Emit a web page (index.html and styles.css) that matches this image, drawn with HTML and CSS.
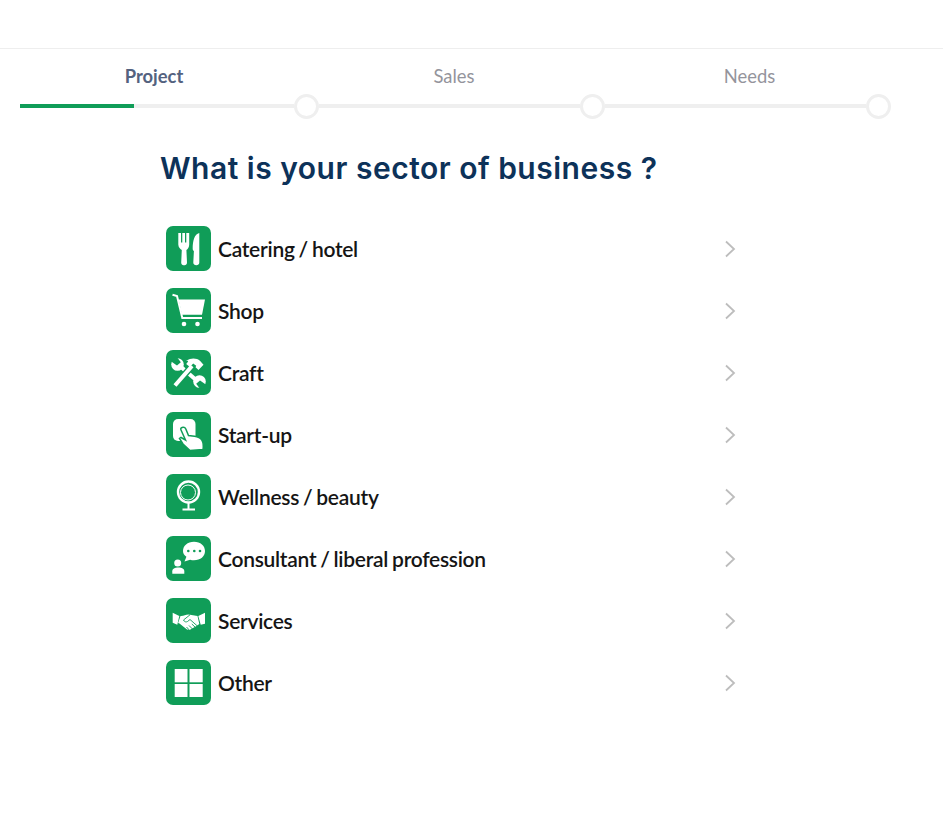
FILE: index.html
```html
<!DOCTYPE html>
<html lang="en">
<head>
  <meta charset="UTF-8">
  <meta name="viewport" content="width=device-width, initial-scale=1">
  <title>Sector of business</title>
  <link rel="stylesheet" href="styles.css">
</head>
<body>

<!-- Top bar -->
<header class="topbar"></header>

<!-- Steps -->
<nav class="steps">
  <div class="step-labels">
    <span class="step-label active">Project</span>
    <span class="step-label">Sales</span>
    <span class="step-label">Needs</span>
  </div>
  <div class="track">
    <div class="segment first"><div class="segment-fill"></div></div>
    <div class="dot"></div>
    <div class="segment"></div>
    <div class="dot"></div>
    <div class="segment"></div>
    <div class="dot"></div>
  </div>
</nav>

<main class="content">
  <h1 class="title">What is your sector of business ?</h1>

  <ul class="sectors">
    <li class="sector">
      <span class="sector-icon">
        <svg viewBox="0 0 45 45" width="45" height="45">
          <path class="fill" d="M12.300 7H15v9.500h1.300V7H19v9.500h1.300V7h2.900v11.500c0 3-1.500 4.500-2.800 5.500l.6 12.500c0 1.800-1.200 2.800-2.300 2.800h-1.200c-1.200 0-2.300-1-2.300-2.800l.6-12.500c-1.300-1-3.500-2.500-3.500-5.500z"/>
          <path class="fill" d="M33.300 7v29.500c0 1.800-1.300 2.800-3 2.800s-3-1-3-2.800l.6-11.500c-1-.5-1.200-1.200-1.200-2.500C26.700 15 28.500 8 33.300 7z"/>
        </svg>
      </span>
      <span class="sector-name">Catering / hotel</span>
      <svg class="chevron" viewBox="0 0 12 18" width="12" height="18"><path d="M2 1.500 10 9l-8 7.500"/></svg>
    </li>
    <li class="sector">
      <span class="sector-icon">
        <svg viewBox="0 0 45 45" width="45" height="45">
          <path class="line" d="M6.500 6.700 11 8l5.300 22H36"/>
          <path class="fill" d="M12.500 11.500H39l-3 15.300H16z"/>
          <circle class="fill" cx="18" cy="36" r="2.300"/>
          <circle class="fill" cx="31.500" cy="36" r="2.300"/>
        </svg>
      </span>
      <span class="sector-name">Shop</span>
      <svg class="chevron" viewBox="0 0 12 18" width="12" height="18"><path d="M2 1.500 10 9l-8 7.500"/></svg>
    </li>
    <li class="sector">
      <span class="sector-icon">
        <svg viewBox="0 0 45 45" width="45" height="45">
          <!-- wrench -->
          <path class="thick" d="M11 13.500 33 32.500"/>
          <circle class="fill" cx="11.500" cy="14.500" r="6.300"/>
          <circle class="fill" cx="33.500" cy="31.500" r="6.300"/>
          <path class="fill-green" d="M4.500 11 11 15.500l3.800-3.300-4.300-5.700z"/>
          <path class="fill-green" d="M40.500 35 34 30.500l-3.800 3.300 4.300 5.700z"/>
          <!-- hammer -->
          <path class="thick-cut" d="M9 35.500 26 16"/>
          <path class="thick" d="M9 35.500 26 16"/>
          <path class="fill" d="M20.500 10.500c4.500-2.800 10-2.800 13.700.4l3.300 3.800-5 5.300-3-2.800.7-1.400-3-2.200-3.300 3.300-3.700-3 2-2.500c-.7-.9-1.500-1.300-2.500-1.700z"/>
        </svg>
      </span>
      <span class="sector-name">Craft</span>
      <svg class="chevron" viewBox="0 0 12 18" width="12" height="18"><path d="M2 1.500 10 9l-8 7.500"/></svg>
    </li>
    <li class="sector">
      <span class="sector-icon">
        <svg viewBox="0 0 45 45" width="45" height="45">
          <rect class="fill" x="7" y="7" width="22.500" height="22" rx="5"/>
          <path class="hand" d="M16 15.500c1.500-.8 3.200 0 3.800 1.500l2.700 6.500 6 .8c3.500.5 6 1.800 7.500 4 1.500 2.500 1.500 6 1 9.200l-13 1-7-6.500-3.500-5.500 1.500-1 4.500 2.500-4.500-10c-.6-1.200 0-2.200 1-2.500z"/>
        </svg>
      </span>
      <span class="sector-name">Start-up</span>
      <svg class="chevron" viewBox="0 0 12 18" width="12" height="18"><path d="M2 1.500 10 9l-8 7.500"/></svg>
    </li>
    <li class="sector">
      <span class="sector-icon">
        <svg viewBox="0 0 45 45" width="45" height="45">
          <circle class="ring" cx="22.500" cy="18" r="10.500"/>
          <circle class="ring-thin" cx="22" cy="18.500" r="7.500"/>
          <path class="line" d="M22.500 29v6M16.500 35.500h12.500"/>
        </svg>
      </span>
      <span class="sector-name">Wellness / beauty</span>
      <svg class="chevron" viewBox="0 0 12 18" width="12" height="18"><path d="M2 1.500 10 9l-8 7.500"/></svg>
    </li>
    <li class="sector">
      <span class="sector-icon">
        <svg viewBox="0 0 45 45" width="45" height="45">
          <path class="fill" d="M28 5.700c6.500 0 11 4 11 9.300s-4.500 9.300-11 9.300c-1.400 0-2.700-.2-3.900-.6L18.500 25.500l1.900-4.700C18.200 19.200 17 17.300 17 15c0-5.300 4.500-9.300 11-9.300z"/>
          <circle class="dots" cx="22.300" cy="15" r="1.300"/>
          <circle class="dots" cx="28.300" cy="15" r="1.300"/>
          <circle class="dots" cx="34" cy="15" r="1.300"/>
          <circle class="fill" cx="11.700" cy="27" r="3.500"/>
          <path class="fill" d="M6.300 37.700v-2.500c0-2.500 2.500-3.700 6-3.700s6 1.200 6 3.700v2.500z"/>
        </svg>
      </span>
      <span class="sector-name">Consultant / liberal profession</span>
      <svg class="chevron" viewBox="0 0 12 18" width="12" height="18"><path d="M2 1.500 10 9l-8 7.500"/></svg>
    </li>
    <li class="sector">
      <span class="sector-icon">
        <svg viewBox="0 0 45 45" width="45" height="45">
          <path class="fill" d="M6.700 14.700l6.600 3.300-2 8.700-4.600-2z"/>
          <path class="fill" d="M39 14.700 32.300 18l2.400 8.700 4.300-1z"/>
          <path class="fill" d="M14.500 18c3 .3 5-1.500 8-1.500l9 1.500 1.800 8-2.800 2-7 4-2.500-.6-7.500-5.900-1.400-.4z"/>
          <path class="finger" d="M24 16.800 17.500 22c1 2 2.500 2.300 4 1.500l2.500-2 7.800 6.900"/>
          <path class="finger" d="M29.500 29.500 25.800 26M26.500 31 23 27.500M23.500 32.300 20.500 29"/>
        </svg>
      </span>
      <span class="sector-name">Services</span>
      <svg class="chevron" viewBox="0 0 12 18" width="12" height="18"><path d="M2 1.500 10 9l-8 7.500"/></svg>
    </li>
    <li class="sector">
      <span class="sector-icon">
        <svg viewBox="0 0 45 45" width="45" height="45">
          <rect class="fill" x="8.700" y="9" width="12.800" height="13.300"/>
          <rect class="fill" x="23.500" y="9" width="13.200" height="13.300"/>
          <rect class="fill" x="8.700" y="24" width="12.800" height="13"/>
          <rect class="fill" x="23.500" y="24" width="13.200" height="13"/>
        </svg>
      </span>
      <span class="sector-name">Other</span>
      <svg class="chevron" viewBox="0 0 12 18" width="12" height="18"><path d="M2 1.500 10 9l-8 7.500"/></svg>
    </li>
  </ul>
</main>

</body>
</html>
```

FILE: styles.css
```css
body {
  margin: 0;
  background: #fff;
  font-family: 'Lato', 'Liberation Sans', sans-serif;
}

.topbar {
  height: 48px;
  border-bottom: 1px solid #eee;
}

/* Steps */
.steps {
  padding-top: 16px;
}

.step-labels {
  display: grid;
  grid-template-columns: 298px 302px 289px;
  margin-left: 5px;
}

.step-label {
  text-align: center;
  font-size: 18.400px;
  line-height: 22px;
  color: #94949c;
}

.step-label.active {
  font-weight: 700;
  color: #54627f;
}

.track {
  display: flex;
  align-items: flex-start;
  margin: 7px 0 0 20px;
}

.segment {
  width: 261px;
  height: 4px;
  margin-top: 10px;
  background: #efefef;
}

.segment.first {
  width: 274px;
}

.segment-fill {
  width: 114px;
  height: 4px;
  background: #109d58;
}

.dot {
  box-sizing: border-box;
  width: 25px;
  height: 25px;
  border: 3px solid #efefef;
  border-radius: 50%;
  background: #fff;
}

/* Question */
.content {
  margin-left: 160px;
  width: 580px;
}

.title {
  margin: 29px 0 0;
  font-family: 'Inter', 'Open Sans', sans-serif;
  font-size: 30px;
  line-height: 40px;
  font-weight: 600;
  letter-spacing: 0.5px;
  color: #0d3259;
  white-space: nowrap;
}

.sectors {
  list-style: none;
  margin: 38px 0 0;
  padding: 0 4px 0 6px;
}

.sector {
  display: flex;
  align-items: center;
  gap: 7px;
  height: 45px;
  margin-bottom: 17px;
}

.sector-icon {
  width: 45px;
  height: 45px;
  border-radius: 7px;
  background: #109d58;
  flex-shrink: 0;
}

.sector-icon svg {
  display: block;
}

.sector-name {
  flex: 1;
  font-size: 21px;
  font-weight: 600;
  letter-spacing: -0.28px;
  word-spacing: -1px;
  color: #151515;
}

.chevron path {
  fill: none;
  stroke: #bdbdbd;
  stroke-width: 1.800;
}

/* Icon parts */
.fill {
  fill: #fff;
}

.fill-green {
  fill: #109d58;
}

.line {
  fill: none;
  stroke: #fff;
  stroke-width: 2;
}

.thick {
  fill: none;
  stroke: #fff;
  stroke-width: 4;
}

.thick-cut {
  fill: none;
  stroke: #109d58;
  stroke-width: 6.500;
}

.hand {
  fill: #fff;
  stroke: #109d58;
  stroke-width: 1.500;
}

.finger {
  fill: none;
  stroke: #109d58;
  stroke-width: 0.900;
}

.ring {
  fill: none;
  stroke: #fff;
  stroke-width: 2.400;
}

.ring-thin {
  fill: none;
  stroke: #fff;
  stroke-width: 1;
}

.dots {
  fill: #109d58;
}
```
